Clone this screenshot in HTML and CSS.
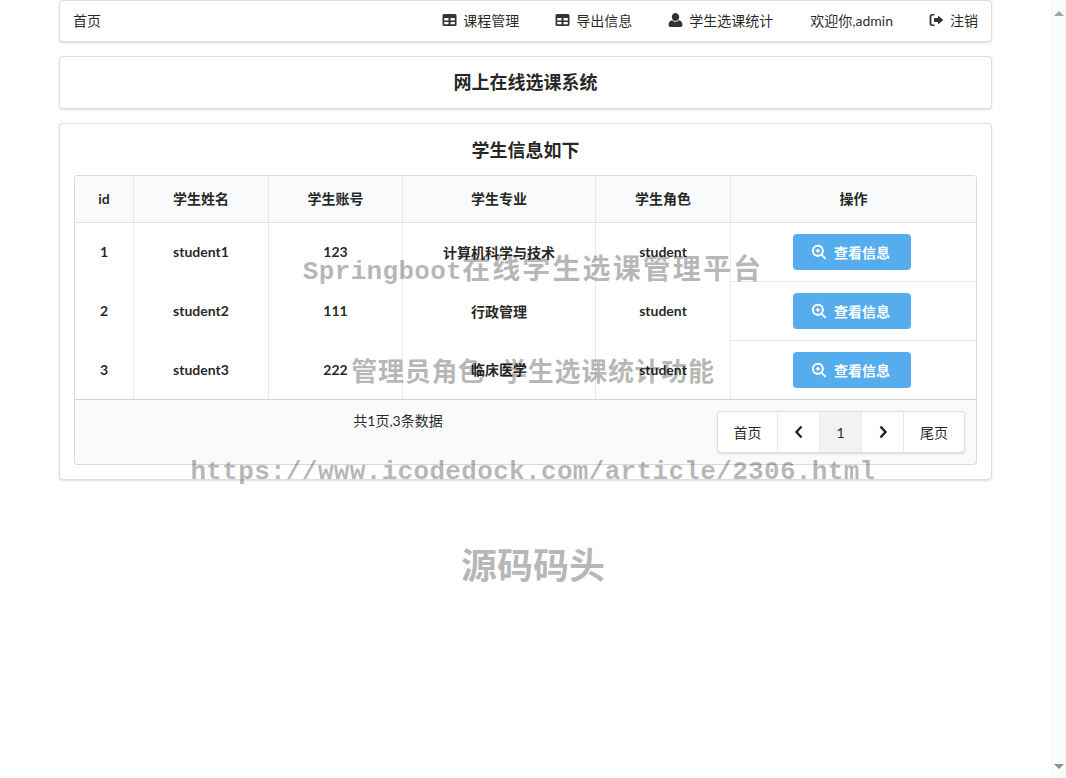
FILE: index.html
```html
<!DOCTYPE html>
<html lang="en">
<head>
    <meta charset="UTF-8">
    <title>网上在线选课系统</title>
    <link rel="stylesheet" href="styles.css">
</head>
<body>
    <div class="page">
        <div class="container">
            <div class="menu">
                <a class="menu-item">首页</a>
                <div class="menu-right">
                    <a class="menu-item">
                        <svg class="icon" width="15" height="14" viewBox="0 0 15 14"><path fill-rule="evenodd" d="M2 1h11a1.5 1.5 0 0 1 1.5 1.5v9A1.5 1.5 0 0 1 13 13H2a1.5 1.5 0 0 1-1.500-1.500v-9A1.500 1.500 0 0 1 2 1zM2.200 5v2.500h4.300V5zM8.500 5v2.500h4.300V5zM2.200 9v2.300h4.300V9zM8.500 9v2.300h4.300V9z"/></svg>
                        课程管理
                    </a>
                    <a class="menu-item">
                        <svg class="icon" width="15" height="14" viewBox="0 0 15 14"><path fill-rule="evenodd" d="M2 1h11a1.5 1.5 0 0 1 1.5 1.5v9A1.5 1.5 0 0 1 13 13H2a1.5 1.5 0 0 1-1.500-1.500v-9A1.500 1.500 0 0 1 2 1zM2.200 5v2.500h4.300V5zM8.500 5v2.500h4.300V5zM2.200 9v2.300h4.300V9zM8.500 9v2.300h4.300V9z"/></svg>
                        导出信息
                    </a>
                    <a class="menu-item">
                        <svg class="icon" width="15" height="14" viewBox="0 0 15 14"><path d="M7.500 0a3.700 3.700 0 0 1 3.700 3.900c0 2-1.500 4.100-3.700 4.100S3.800 5.900 3.800 3.900A3.700 3.700 0 0 1 7.500 0zM4.300 7.200C5.200 8.200 6.300 8.800 7.500 8.800s2.300-.6 3.200-1.600c2.400.3 3.800 2 3.800 4.800 0 1.200-.9 2-2 2h-10c-1.100 0-2-.8-2-2 0-2.800 1.400-4.500 3.800-4.800z"/></svg>
                        学生选课统计
                    </a>
                    <a class="menu-item">欢迎你,admin</a>
                    <a class="menu-item">
                        <svg class="icon" width="15" height="14" viewBox="0 0 15 14"><path d="M5.500 2.500H3.300C2.800 2.500 2.400 2.900 2.400 3.400v7.200c0 .5.400.900.900.900h2.200V13H3C1.600 13 .6 12 .6 10.700V3.300C.6 2 1.600 1 3 1h2.500zM9 2.500l5.300 4.500L9 11.500V9H5V5h4z"/></svg>
                        注销
                    </a>
                </div>
            </div>

            <div class="segment title-box">
                <h3>网上在线选课系统</h3>
            </div>

            <div class="segment list-box">
                <h3>学生信息如下</h3>
                <div class="table-wrap">
                    <table>
                        <colgroup>
                            <col class="col-id">
                            <col class="col-name">
                            <col class="col-account">
                            <col class="col-major">
                            <col class="col-role">
                            <col class="col-action">
                        </colgroup>
                        <thead>
                            <tr>
                                <th>id</th>
                                <th>学生姓名</th>
                                <th>学生账号</th>
                                <th>学生专业</th>
                                <th>学生角色</th>
                                <th>操作</th>
                            </tr>
                        </thead>
                        <tbody>
                            <tr>
                                <td>1</td>
                                <td>student1</td>
                                <td>123</td>
                                <td>计算机科学与技术</td>
                                <td>student</td>
                                <td>
                                    <button class="btn">
                                        <svg width="16" height="16" viewBox="0 0 16 16"><path fill-rule="evenodd" d="M6.800.8a6 6 0 0 1 4.800 9.600l3.700 3.700-1.400 1.400-3.700-3.700A6 6 0 1 1 6.800.8zm0 2a4 4 0 1 0 0 8 4 4 0 0 0 0-8zM6 4.800h1.600V6h1.200v1.600H7.600v1.200H6V7.600H4.800V6H6z"/></svg>
                                        查看信息
                                    </button>
                                </td>
                            </tr>
                            <tr>
                                <td>2</td>
                                <td>student2</td>
                                <td>111</td>
                                <td>行政管理</td>
                                <td>student</td>
                                <td>
                                    <button class="btn">
                                        <svg width="16" height="16" viewBox="0 0 16 16"><path fill-rule="evenodd" d="M6.800.8a6 6 0 0 1 4.800 9.600l3.700 3.700-1.400 1.400-3.700-3.700A6 6 0 1 1 6.800.8zm0 2a4 4 0 1 0 0 8 4 4 0 0 0 0-8zM6 4.800h1.600V6h1.200v1.600H7.600v1.200H6V7.600H4.800V6H6z"/></svg>
                                        查看信息
                                    </button>
                                </td>
                            </tr>
                            <tr>
                                <td>3</td>
                                <td>student3</td>
                                <td>222</td>
                                <td>临床医学</td>
                                <td>student</td>
                                <td>
                                    <button class="btn">
                                        <svg width="16" height="16" viewBox="0 0 16 16"><path fill-rule="evenodd" d="M6.800.8a6 6 0 0 1 4.800 9.600l3.700 3.700-1.400 1.400-3.700-3.700A6 6 0 1 1 6.800.8zm0 2a4 4 0 1 0 0 8 4 4 0 0 0 0-8zM6 4.800h1.600V6h1.200v1.600H7.600v1.200H6V7.600H4.800V6H6z"/></svg>
                                        查看信息
                                    </button>
                                </td>
                            </tr>
                        </tbody>
                    </table>
                    <div class="table-foot">
                        <div class="total">共1页,3条数据</div>
                        <div class="pager">
                            <a class="pager-item wide">首页</a>
                            <a class="pager-item">
                                <svg width="10" height="14" viewBox="0 0 10 14"><path d="M7.500 1.500L2.500 7l5 5.500" fill="none" stroke="currentColor" stroke-width="2.400"/></svg>
                            </a>
                            <a class="pager-item active">1</a>
                            <a class="pager-item">
                                <svg width="10" height="14" viewBox="0 0 10 14"><path d="M2.500 1.500L7.500 7l-5 5.500" fill="none" stroke="currentColor" stroke-width="2.400"/></svg>
                            </a>
                            <a class="pager-item wide">尾页</a>
                        </div>
                    </div>
                </div>
            </div>
        </div>
        <div class="scrollbar">
            <span class="arrow-up"></span>
            <span class="arrow-down"></span>
        </div>
    </div>

    <div class="watermark">
        <div class="wm-line wm-one"><span class="wm-en">Springboot</span>在线学生选课管理平台</div>
        <div class="wm-line wm-two">管理员角色 学生选课统计功能</div>
        <div class="wm-line wm-three wm-en">https://www.icodedock.com/article/2306.html</div>
        <div class="wm-line wm-four">源码码头</div>
    </div>
</body>
</html>
```

FILE: styles.css
```css
*{
    margin: 0;
    padding: 0;
    box-sizing: border-box;
}
body{
    font-family: Lato, "Noto Sans CJK SC", sans-serif;
    font-size: 14px;
    color: rgba(0, 0, 0, 0.87);
    background: #fff;
    height: 778px;
    overflow: hidden;
}
.page{
    display: flex;
    height: 778px;
}
.container{
    flex: 1;
    padding: 0 59px;
}
.scrollbar{
    width: 15px;
    background: #fafafa;
    display: flex;
    flex-direction: column;
    justify-content: space-between;
    align-items: center;
    padding: 11px 0 9px;
}
.arrow-up{
    border: 5px solid transparent;
    border-top: 0;
    border-bottom: 5px solid #a3a3a3;
}
.arrow-down{
    border: 5px solid transparent;
    border-bottom: 0;
    border-top: 5px solid #8f8f8f;
}

/* top menu */
.menu{
    height: 42px;
    display: flex;
    align-items: center;
    justify-content: space-between;
    padding: 0 13px 2px;
    background: #fff;
    border: 1px solid rgba(34, 36, 38, 0.15);
    border-radius: 4px;
    box-shadow: 0 1px 2px rgba(34, 36, 38, 0.15);
}
.menu-right{
    display: flex;
    gap: 37px;
}
.menu-item{
    display: flex;
    align-items: center;
    gap: 6px;
}
.icon{
    fill: #333;
    margin-left: -1px;
}

.segment{
    background: #fff;
    border: 1px solid rgba(34, 36, 38, 0.15);
    border-radius: 4px;
    box-shadow: 0 1px 2px rgba(34, 36, 38, 0.15);
    margin-top: 14px;
}
.segment h3{
    font-size: 18px;
    font-weight: 700;
    text-align: center;
    line-height: 26px;
}
.title-box{
    height: 53px;
    padding-top: 12px;
}
.list-box{
    height: 357px;
    padding: 13px 14px 14px;
}
.list-box h3{
    margin-bottom: 12px;
}

/* table */
.table-wrap{
    border: 1px solid rgba(34, 36, 38, 0.15);
    border-radius: 4px;
    overflow: hidden;
    height: 290px;
    background: #f9fafb;
}
table{
    width: 901px;
    table-layout: fixed;
    border-collapse: separate;
    border-spacing: 0;
    background: #fff;
}
.col-id{ width: 59px; }
.col-name{ width: 135px; }
.col-account{ width: 134px; }
.col-major{ width: 193px; }
.col-role{ width: 135px; }
.col-action{ width: 245px; }
th,
td{
    text-align: center;
    font-weight: 700;
    border-right: 1px solid #e8e8e9;
    padding-bottom: 2px;
}
th:last-child,
td:last-child{
    border-right: 0;
}
th{
    height: 47px;
    background: #f9fafb;
    border-bottom: 1px solid #e0e1e2;
}
td{
    height: 59px;
}
td:last-child{
    border-bottom: 1px solid #e8e8e9;
    padding: 0 3px 0 0;
}
tbody tr:last-child td{
    border-bottom: 1px solid #d4d5d5;
}
.btn{
    width: 118px;
    height: 36px;
    border: 0;
    border-radius: 4px;
    background: #56adee;
    color: #fff;
    font-family: inherit;
    font-size: 14px;
    font-weight: 700;
    display: inline-flex;
    align-items: center;
    justify-content: center;
    gap: 7px;
    padding: 0 3px 1px 0;
    vertical-align: middle;
}
.btn svg{
    fill: #fff;
}

/* table footer */
.table-foot{
    display: flex;
    justify-content: space-between;
    padding: 11px 11px 0 0;
}
.total{
    flex: 1;
    padding-left: 4px;
    text-align: center;
    line-height: 20px;
}
.pager{
    display: flex;
    height: 42px;
    background: #fff;
    border: 1px solid rgba(34, 36, 38, 0.15);
    border-radius: 4px;
    box-shadow: 0 1px 2px rgba(34, 36, 38, 0.15);
}
.pager-item{
    width: 42px;
    display: flex;
    align-items: center;
    justify-content: center;
    border-right: 1px solid #e8e8e9;
}
.pager-item:last-child{
    border-right: 0;
}
.wide{
    width: 60px;
}
.active{
    background: #f2f2f2;
}

/* watermark over the whole window */
.watermark{
    position: absolute;
    top: 0;
    left: 0;
    width: 1066px;
    padding-top: 224px;
    text-align: center;
    color: rgba(0, 0, 0, 0.3);
    font-weight: 700;
    font-family: "Liberation Mono", "Noto Sans CJK SC", monospace;
    pointer-events: none;
}
.wm-line{
    height: 100px;
    line-height: 100px;
    white-space: nowrap;
}
.wm-en{
    font-size: 26px;
    letter-spacing: 0.33px;
}
.wm-one{
    font-size: 28px;
    letter-spacing: 2.1px;
    line-height: 96px;
}
.wm-two{
    font-size: 26px;
    letter-spacing: 0.7px;
}
.wm-three{
    line-height: 96px;
}
.wm-four{
    font-size: 36px;
    height: 90px;
    line-height: 92px;
}
```
